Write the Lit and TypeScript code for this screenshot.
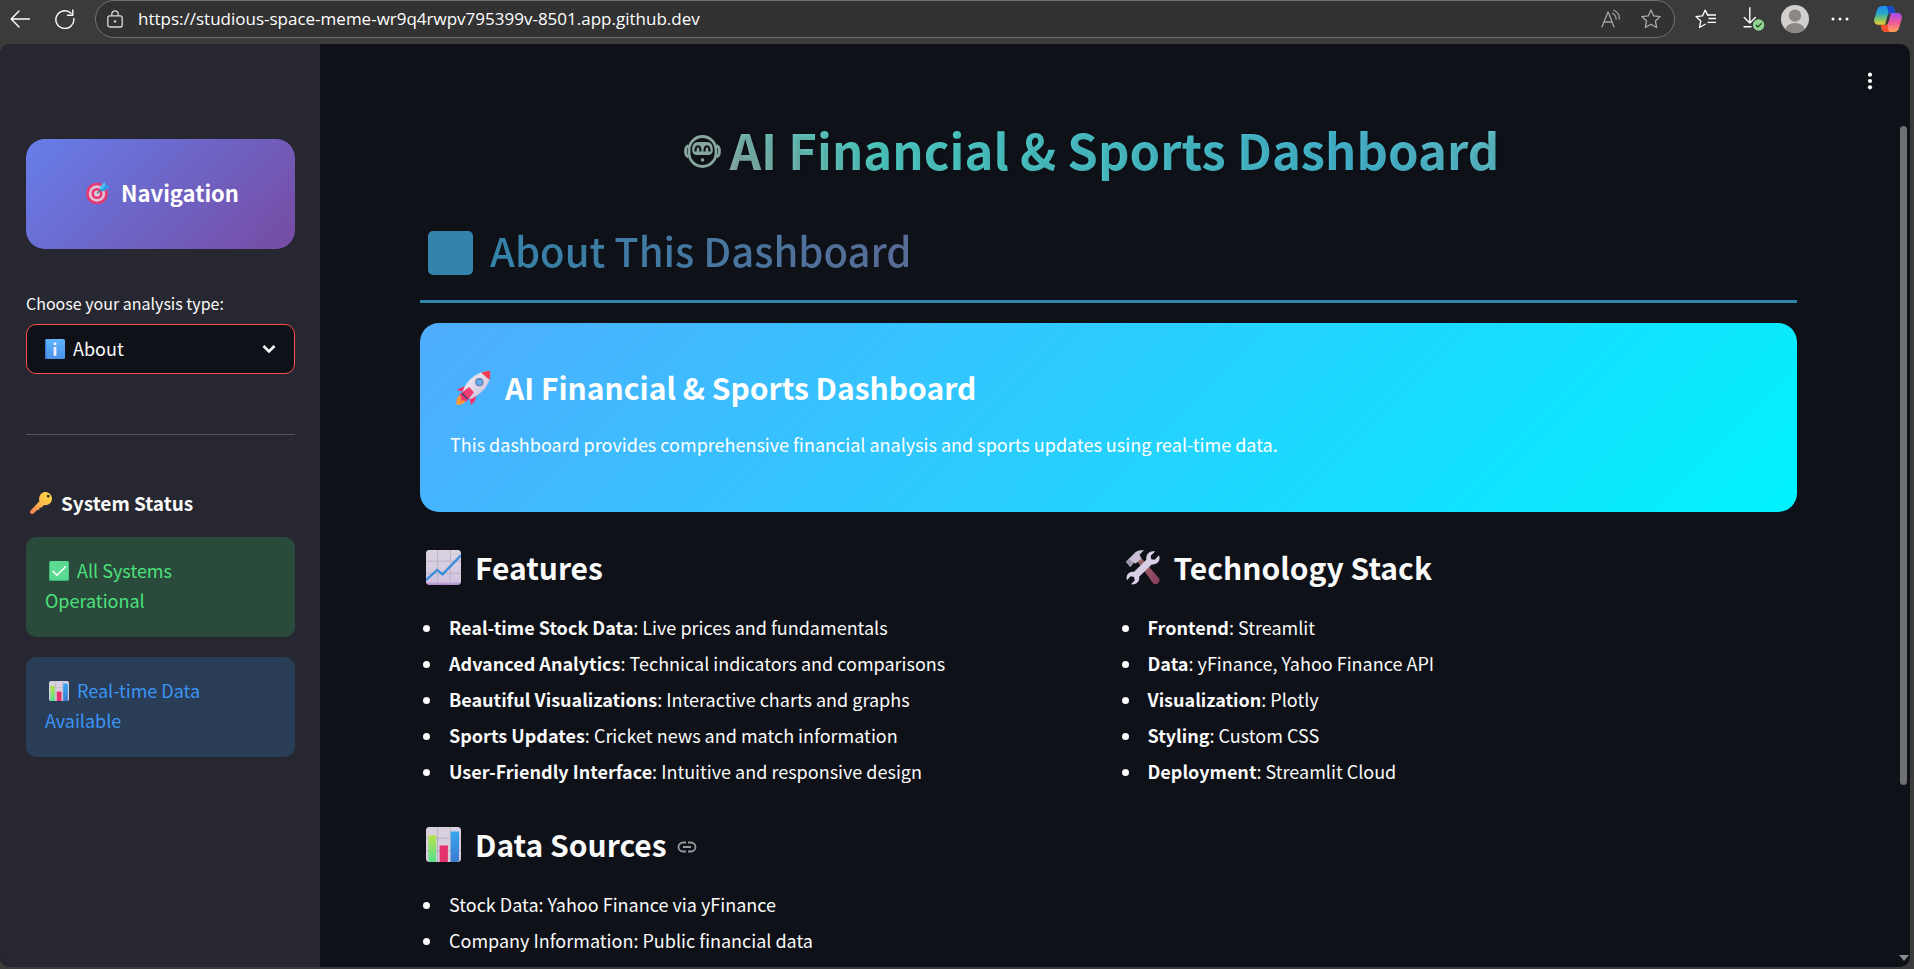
import { LitElement, html, css, svg } from "lit";
import { customElement, property } from "lit/decorators.js";

/** Glyph artwork, each entry holding its viewBox and shapes. */
const ICONS: Record<string, { box: string; art: unknown }> = {
  back: {
    box: "0 0 20 18",
    art: svg`<path d="M19.500 9H1.500M9 1 1.200 9 9 17" fill="none" stroke="#fff" stroke-width="1.400" stroke-linecap="round" stroke-linejoin="round"/>`,
  },
  reload: {
    box: "0 0 20 20",
    art: svg`<path d="M16 4.200A9 8.800 0 1 0 18.800 9.500M17.800 1v5.300h-5.300" fill="none" stroke="#fff" stroke-width="1.400" stroke-linecap="round" stroke-linejoin="round"/>`,
  },
  lock: {
    box: "0 0 16 18",
    art: svg`<rect x=".8" y="5.800" width="14.400" height="11.200" rx="2" fill="none" stroke="#dcdcdc" stroke-width="1.300"/><path d="M4.800 5.500V4a3.200 3.200 0 0 1 6.400 0v1.500" fill="none" stroke="#dcdcdc" stroke-width="1.300"/><circle cx="8" cy="11.400" r="1.200" fill="#dcdcdc"/>`,
  },
  aloud: {
    box: "0 0 20 20",
    art: svg`<path d="M1 18 6.800 3.500h.6L13 18M3 13h8.200" fill="none" stroke="#a3a3a3" stroke-width="1.300" stroke-linecap="round"/><path d="M11.500 4.300a6.500 6.500 0 0 1 3.600 6M12.800 1.200a9.500 9.500 0 0 1 5.600 9" fill="none" stroke="#a3a3a3" stroke-width="1.200" stroke-linecap="round"/>`,
  },
  star: {
    box: "0 0 20 20",
    art: svg`<path d="m10 1 2.700 5.900 6.500.7-4.800 4.400 1.300 6.500L10 15.300l-5.700 3.200L5.600 12 .8 7.600l6.500-.7z" fill="none" stroke="#a9a9a9" stroke-width="1.300" stroke-linejoin="round"/>`,
  },
  favorites: {
    box: "0 0 21 20",
    art: svg`<path d="m12.800 6.400-2.600-5.300-2.700 5.800-6.500.7 4.800 4.400-1.300 6.500 5.700-3.200M14 9.500h6.500M12.500 6h8M13 13.300h7.500" fill="none" stroke="#fff" stroke-width="1.300" stroke-linejoin="round" stroke-linecap="round"/>`,
  },
  download: {
    box: "0 0 22 24",
    art: svg`<path d="M6.800.8v15M1.200 10.500l5.600 5.600 5.600-5.600M1 19.800h7" fill="none" stroke="#fff" stroke-width="1.400" stroke-linecap="round" stroke-linejoin="round"/><circle cx="15.600" cy="18" r="5.700" fill="#8fd694"/><path d="m12.900 18 2 2 3.600-3.700" fill="none" stroke="#1d3b1f" stroke-width="1.200"/>`,
  },
  avatar: {
    box: "0 0 28 28",
    art: svg`<defs><clipPath id="av"><circle cx="14" cy="14" r="14"/></clipPath></defs><g clip-path="url(#av)"><rect width="28" height="28" fill="#d2d0ce"/><circle cx="14" cy="10.600" r="6.200" fill="#8a8785"/><ellipse cx="14" cy="25" rx="9.800" ry="7" fill="#8a8785"/></g>`,
  },
  dots: {
    box: "0 0 18 4",
    art: svg`<g fill="#fff"><circle cx="2" cy="2" r="1.500"/><circle cx="9" cy="2" r="1.500"/><circle cx="16" cy="2" r="1.500"/></g>`,
  },
  copilot: {
    box: "0 0 28 26",
    art: svg`<defs><linearGradient id="cpa" x1="0" y1="0" x2="0" y2="1"><stop offset="0" stop-color="#1a8cf0"/><stop offset=".4" stop-color="#2aa7c8"/><stop offset=".7" stop-color="#7cc46a"/><stop offset="1" stop-color="#f6cb2f"/></linearGradient><linearGradient id="cpb" x1="0" y1="0" x2="0" y2="1"><stop offset="0" stop-color="#a24df0"/><stop offset=".5" stop-color="#f0589a"/><stop offset="1" stop-color="#ffa254"/></linearGradient></defs><path d="M16 0c3 0 4 1.500 4.600 4.200l.8 2.800H17c-2 0-3 1-3.600 3L11 18.800H4.500C1 18.800-.3 16.500.3 13L3 4C4 1 5.500 0 8.500 0z" fill="url(#cpa)"/><path d="M12 26c-3 0-4-1.500-4.600-4.200L6.800 19H11c2 0 3-1 3.600-3L17 7h6.500c3.500 0 4.800 2.500 4.200 6L25 22c-1 3-2.500 4-5.500 4z" fill="url(#cpb)"/><path d="M16 0c3 0 4 1.500 4.600 4.200l.8 2.800H17c-1.400 0-2.200.4-2.800 1.200C14.500 4 13.500 1 12 0z" fill="#1b48c8"/><path d="M12 26c-3 0-4-1.500-4.600-4.200L6.800 19H11c1.400 0 2.200-.4 2.800-1.200-.2 4 .5 7 2.200 8.200z" fill="#f4502f"/>`,
  },
  kebab: {
    box: "0 0 6 18",
    art: svg`<g fill="#fafafa"><circle cx="3" cy="2.700" r="2.100"/><circle cx="3" cy="9" r="2.100"/><circle cx="3" cy="15.300" r="2.100"/></g>`,
  },
  chevron: {
    box: "0 0 14 10",
    art: svg`<path d="m1.500 2 5.500 5.500L12.500 2" fill="none" stroke="#fafafa" stroke-width="2.600"/>`,
  },
  link: {
    box: "0 0 20 12",
    art: svg`<path d="M9 1.500H6a4.500 4.500 0 0 0 0 9h3M11 1.500h3a4.500 4.500 0 0 1 0 9h-3M6 6h8" fill="none" stroke="#97989b" stroke-width="1.800"/>`,
  },
  target: {
    box: "0 0 24 24",
    art: svg`<circle cx="11" cy="13.500" r="10.800" fill="#e5396f"/><circle cx="11" cy="13.500" r="8.200" fill="#dfc3dc"/><circle cx="11" cy="13.500" r="5.600" fill="#e5396f"/><circle cx="11" cy="13.500" r="2.900" fill="#dcd0e4"/><path d="m11 13.500 6-6" stroke="#5d7488" stroke-width="1.600"/><path d="m14 7 4.500-5 .8 2.800L24 6l-5 4.800-4 .8z" fill="#2f9fe8"/><path d="m14 7 4.500-5 .8 2.800-4 5.200z" fill="#54c1f5"/>`,
  },
  info: {
    box: "0 0 20 20",
    art: svg`<defs><linearGradient id="inf" x1="0" y1="0" x2="0" y2="1"><stop offset="0" stop-color="#5fb4fb"/><stop offset="1" stop-color="#4a93ea"/></linearGradient></defs><rect width="20" height="20" rx="1.500" fill="url(#inf)"/><path d="M0 2v16.500a1.500 1.500 0 0 0 1.500 1.500H3L1.200 18V2z" fill="#3a72cf"/><circle cx="10" cy="4.700" r="1.500" fill="#f3ecfb"/><path d="M8.600 8h2.800v8.800H8.600z" fill="#f3ecfb"/>`,
  },
  key: {
    box: "0 0 22 22",
    art: svg`<defs><linearGradient id="ky" x1="1" y1="0" x2="0" y2="1"><stop offset="0" stop-color="#ffe146"/><stop offset=".5" stop-color="#ffb84a"/><stop offset="1" stop-color="#ee7d52"/></linearGradient></defs><path fill-rule="evenodd" d="M15.500 0A6.600 6.600 0 0 1 22 6.500c0 4-3.200 7-7 6.600l-1.300.2-2 2.200-2.200.2-.3 2.100-2.200.3-3 3.100C3 22 1.200 22.200.4 21.300-.3 20.300.200 19 .600 18.500l8.800-9.200A7 7 0 0 1 9.200 6C9.500 2.600 12 0 15.500 0zm2.700 2.800a1.400 1.400 0 1 0 0 2.800 1.400 1.400 0 0 0 0-2.800z" fill="url(#ky)"/>`,
  },
  check: {
    box: "0 0 20 20",
    art: svg`<rect width="20" height="20" rx="1.500" fill="#3cba78"/><rect x="1" y="0" width="18.500" height="18.800" rx="1.500" fill="#5ada92"/><path d="m4 10.200 4 4 8.500-8.400" fill="none" stroke="#fff" stroke-width="1.600" stroke-linecap="round"/>`,
  },
  bars: {
    box: "0 0 36 36",
    art: svg`<defs><linearGradient id="bg1" x1="0" y1="0" x2="0" y2="1"><stop offset="0" stop-color="#b5e34a"/><stop offset="1" stop-color="#55e08f"/></linearGradient><linearGradient id="bg2" x1="0" y1="0" x2="0" y2="1"><stop offset="0" stop-color="#35a7f2"/><stop offset="1" stop-color="#3b7bd0"/></linearGradient></defs><rect width="36" height="36" rx="3.500" fill="#d9d0df"/><path d="M0 11.500h36M0 24.500h36M12 0v36M25 0v36" stroke="#b6aebd" stroke-width="1"/><path d="M2.500 8.500h8V36H3.500a3 3 0 0 1-1-2z" fill="url(#bg1)"/><path d="M14 19h8.500v17H14z" fill="#e3316d"/><path d="M25.500 4.500H34V35l-1.500 1h-7z" fill="url(#bg2)"/>`,
  },
  chart: {
    box: "0 0 36 36",
    art: svg`<defs><linearGradient id="ch" x1="0" y1="0" x2="0" y2="1"><stop offset="0" stop-color="#dad5df"/><stop offset=".9" stop-color="#d3c4e2"/><stop offset="1" stop-color="#a983c9"/></linearGradient></defs><rect width="36" height="36" rx="3.500" fill="url(#ch)"/><path d="M0 11.500h36M0 24h36M12 0v36M25 0v36" stroke="#b9b1c0" stroke-width="1"/><path d="M0 31 11.500 20.500l5.500 4.500L36 5.500" fill="none" stroke="#3a8fdc" stroke-width="2.400"/>`,
  },
  rocket: {
    box: "0 0 36 36",
    art: svg`<defs><linearGradient id="rk" x1="0" y1="0" x2="1" y2="1"><stop offset="0" stop-color="#f6f1fa"/><stop offset="1" stop-color="#c9bcd6"/></linearGradient></defs><path d="M5 26c-4 1-5 5-4.500 9.700C5 36 8.500 35 9.800 31z" fill="#ff9838"/><path d="M11 16 3 19l-2 2 8 1zM21 25l-1.500 7-4 4-2-8z" fill="#f0356b"/><path d="M35 1c1.500 10-4.500 20-15.500 26.500L15 30l-8-8C10 11 22 1 35 1z" fill="url(#rk)"/><path d="M26 2.800C29 1.500 32 1 35 1c.5 3 .200 6-.6 9z" fill="#f23a52"/><path d="m13.500 17.500 5 5.500-8 10-2.500-2-2.800 1L5 27l-2-1.500z" fill="#f23c72"/><circle cx="24" cy="12.500" r="4.200" fill="#5f7fae"/><circle cx="24" cy="12.500" r="2.800" fill="#63aef5"/><path d="m6 24 6 6" stroke="#3b4170" stroke-width="1.500"/>`,
  },
  tools: {
    box: "0 0 36 36",
    art: svg`<defs><linearGradient id="hn" x1="0" y1="0" x2="1" y2="1"><stop offset="0" stop-color="#9b6a68"/><stop offset="1" stop-color="#8b3b5f"/></linearGradient></defs><path d="m13 12 4-3.500L35 29c2 3-2 8-6 5.500z" fill="url(#hn)"/><path d="M1 12 11 2c2-1.500 5-2 8.500-1.700L15 5l2 4-6 5-2-1-3.500 4.500z" fill="#c9c0d6"/><path d="m1 12 4.500 5.500L9 13l-5-4z" fill="#9d93ad"/><path d="M31 1.500 26.500 6l.5 3.500 3.500.5L35 5.500c2 5-1.500 10-7.500 9.300L14.500 27.500C15.500 32 12 36 6 35.300l4-4-.7-3.600-3.500-.6L2 31c-1.500-5 2-9 7-8.500L22 10C21 4.500 25.500 0 31 1.500z" fill="#d8cfe6"/>`,
  },
  robot: {
    box: "0 0 37 33",
    art: svg`<g fill="none" stroke="#87a69d" stroke-width="2.800"><rect x="5" y="1.500" width="27" height="30" rx="13.500" ry="13.500"/><path d="M4.500 10.500c-4 1.500-4 10 0 11.500M32.500 10.500c4 1.500 4 10 0 11.500"/></g><path d="M14 7h9c4 0 6 3 5.800 8 0 3.500-2 5-4.800 5H13c-2.800 0-4.800-1.500-4.800-5C8 10 10 7 14 7z" fill="#87a69d"/><path d="M11.500 16.500c0-7 5-7 5 0M20.500 16.500c0-7 5-7 5 0" fill="none" stroke="#0e1117" stroke-width="2.200"/><circle cx="18.500" cy="25" r="1.800" fill="#87a69d"/>`,
  },
  square: {
    box: "0 0 45 44",
    art: svg`<rect width="45" height="44" rx="5" fill="#3483aa"/>`,
  },
};

/** Inline SVG icon of a given pixel size. */
const icon = (name: string, width: number, height = width) => html`
  <svg class="icon" width=${width} height=${height} viewBox=${ICONS[name].box} preserveAspectRatio="none" aria-hidden="true">
    ${ICONS[name].art}
  </svg>
`;

const shared = css`
  * {
    box-sizing: border-box;
  }
  .icon {
    display: block;
    flex: none;
  }
  button {
    display: grid;
    place-items: center;
    padding: 0;
    border: 0;
    background: none;
    color: inherit;
    font: inherit;
    cursor: pointer;
  }
  h1,
  h2,
  h3,
  p,
  ul {
    margin: 0;
    padding: 0;
  }
`;

@customElement("browser-bar")
class BrowserBar extends LitElement {
  static styles = [
    shared,
    css`
      :host {
        display: flex;
        flex: none;
        height: 44px;
        padding-bottom: 6px;
        background: #3b3b3b;
        font-family: "Open Sans", "Noto Sans", sans-serif;
      }
      .nav {
        display: grid;
        grid-template-columns: 40px 50px;
        padding-right: 5px;
      }
      .address {
        display: flex;
        flex: 1;
        align-items: center;
        gap: 15px;
        min-width: 0;
        padding: 0 13px 0 11px;
        border: 1px solid #707070;
        border-radius: 19px;
        background: #323232;
      }
      .url {
        flex: 1;
        min-width: 0;
        padding: 0;
        border: 0;
        outline: 0;
        background: none;
        color: #fff;
        font-family: inherit;
        font-size: 17px;
        line-height: 24px;
      }
      .inline {
        display: flex;
        gap: 20px;
      }
      .tools {
        display: grid;
        grid-template-columns: 52px 46px 36px 54px 42px;
        padding: 0 5px 0 4px;
      }
    `,
  ];

  render() {
    return html`
      <nav class="nav" aria-label="History">
        <button aria-label="Back">${icon("back", 20, 18)}</button>
        <button aria-label="Refresh">${icon("reload", 20)}</button>
      </nav>
      <div class="address">
        ${icon("lock", 16, 18)}
        <input class="url" aria-label="Address" value="https://studious-space-meme-wr9q4rwpv795399v-8501.app.github.dev" />
        <div class="inline">
          <button aria-label="Read aloud">${icon("aloud", 20)}</button>
          <button aria-label="Add to favorites">${icon("star", 20)}</button>
        </div>
      </div>
      <div class="tools">
        <button aria-label="Favorites">${icon("favorites", 21, 20)}</button>
        <button aria-label="Downloads">${icon("download", 22, 24)}</button>
        <button aria-label="Profile">${icon("avatar", 28)}</button>
        <button aria-label="More">${icon("dots", 18, 4)}</button>
        <button aria-label="Copilot">${icon("copilot", 28, 26)}</button>
      </div>
    `;
  }
}

@customElement("side-panel")
class SidePanel extends LitElement {
  static styles = [
    shared,
    css`
      :host {
        display: flex;
        flex: none;
        flex-direction: column;
        width: 320px;
        padding: 95px 25px 0 26px;
        background: #262730;
      }
      .banner {
        display: flex;
        align-items: center;
        justify-content: center;
        gap: 11px;
        padding: 38px 0 42px 4px;
        border-radius: 19px;
        background: linear-gradient(135deg, #667eea, #764ba2);
        color: #fff;
        font-size: 22px;
        font-weight: 600;
        line-height: 30px;
      }
      .label {
        margin-top: 40px;
        font-size: 16px;
        line-height: 28px;
      }
      .picker {
        display: grid;
        align-items: center;
        margin-top: 7px;
      }
      .picker > * {
        grid-area: 1 / 1;
      }
      .picker .icon {
        pointer-events: none;
        margin-left: 19px;
      }
      .picker .icon:last-child {
        justify-self: end;
        margin-right: 19px;
      }
      select {
        appearance: none;
        width: 100%;
        height: 50px;
        padding: 0 46px 3px;
        border: 1px solid #ff4b4b;
        border-radius: 10px;
        background: #0e1117;
        color: #fafafa;
        font-family: inherit;
        font-size: 18px;
      }
      hr {
        width: 100%;
        height: 1px;
        margin: 60px 0 54px;
        border: 0;
        background: #52535b;
      }
      .status {
        display: flex;
        align-items: center;
        gap: 9px;
        padding-left: 4px;
        font-size: 19px;
        font-weight: 600;
        line-height: 28px;
      }
      .alerts {
        display: grid;
        gap: 20px;
        margin-top: 20px;
      }
      .alert {
        padding: 18px 60px 22px 19px;
        border-radius: 10px;
        font-size: 18px;
        line-height: 30px;
      }
      .alert .icon {
        display: inline-block;
        margin: 0 4px 0 4px;
        vertical-align: -3px;
      }
      .success {
        background: #2a4a3b;
        color: #4de07c;
      }
      .notice {
        background: #2a3d56;
        color: #3b95f5;
      }
    `,
  ];

  render() {
    return html`
      <h3 class="banner">${icon("target", 24)}<span>Navigation</span></h3>
      <label class="label" for="analysis">Choose your analysis type:</label>
      <div class="picker">
        <select id="analysis">
          <option>About</option>
        </select>
        ${icon("info", 20)} ${icon("chevron", 14, 10)}
      </div>
      <hr />
      <h3 class="status">${icon("key", 22)}<span>System Status</span></h3>
      <div class="alerts">
        <p class="alert success" role="status">${icon("check", 20)}All Systems Operational</p>
        <p class="alert notice" role="status">${icon("bars", 20)}Real-time Data Available</p>
      </div>
    `;
  }
}

type Entry = { term?: string; text: string };

@customElement("topic-list")
class TopicList extends LitElement {
  @property() glyph = "";
  @property() heading = "";
  @property({ type: Boolean }) linked = false;
  @property({ attribute: false }) entries: Entry[] = [];

  static styles = [
    shared,
    css`
      :host {
        display: block;
      }
      .heading {
        display: flex;
        align-items: center;
        gap: 14px;
        margin: 34px 0 21px;
        padding-left: 6px;
        font-size: 30px;
        font-weight: 600;
        line-height: 42px;
      }
      .anchor {
        padding-top: 6px;
        margin-left: -4px;
      }
      ul {
        padding-left: 29px;
        font-size: 18px;
        line-height: 36px;
        list-style: none;
      }
      li::before {
        content: "";
        display: inline-block;
        width: 7px;
        height: 7px;
        margin: 0 19px 0 -26px;
        border-radius: 50%;
        background: currentColor;
        vertical-align: 3px;
      }
      strong {
        font-weight: 600;
      }
    `,
  ];

  render() {
    return html`
      <h2 class="heading">
        ${icon(this.glyph, 35)}<span>${this.heading}</span>
        ${this.linked ? html`<a class="anchor" href="#data-sources" aria-label="Link to heading">${icon("link", 20, 12)}</a>` : ""}
      </h2>
      <ul>
        ${this.entries.map((e) => html`<li>${e.term ? html`<strong>${e.term}</strong>: ` : ""}${e.text}</li>`)}
      </ul>
    `;
  }
}

@customElement("app-root")
class AppRoot extends LitElement {
  private features: Entry[] = [
    { term: "Real-time Stock Data", text: "Live prices and fundamentals" },
    { term: "Advanced Analytics", text: "Technical indicators and comparisons" },
    { term: "Beautiful Visualizations", text: "Interactive charts and graphs" },
    { term: "Sports Updates", text: "Cricket news and match information" },
    { term: "User-Friendly Interface", text: "Intuitive and responsive design" },
  ];

  private stack: Entry[] = [
    { term: "Frontend", text: "Streamlit" },
    { term: "Data", text: "yFinance, Yahoo Finance API" },
    { term: "Visualization", text: "Plotly" },
    { term: "Styling", text: "Custom CSS" },
    { term: "Deployment", text: "Streamlit Cloud" },
  ];

  private sources: Entry[] = [
    { text: "Stock Data: Yahoo Finance via yFinance" },
    { text: "Company Information: Public financial data" },
  ];

  static styles = [
    shared,
    css`
      :host {
        display: flex;
        flex-direction: column;
        height: 100vh;
        overflow: hidden;
        background: #3b3b3b;
        color: #fafafa;
        font-family: "Noto Sans CJK SC", "Noto Sans", sans-serif;
      }
      .page {
        position: relative;
        display: flex;
        flex: 1;
        min-height: 0;
        margin: 0 4px 2px 0;
        border-radius: 10px;
        background: #0e1117;
        overflow: hidden;
      }
      main {
        flex: 1;
        min-width: 0;
        padding: 72px 100px 0;
        overflow: hidden;
      }
      .menu {
        position: absolute;
        top: 22px;
        right: 25px;
        width: 30px;
        height: 30px;
      }
      .title {
        display: flex;
        align-items: center;
        justify-content: center;
        gap: 9px;
        padding-right: 34px;
        background: linear-gradient(45deg, #ff6b6b, #4ecdc4, #45b7d1, #96ceb4);
        background-clip: text;
        -webkit-background-clip: text;
        color: transparent;
        font-size: 49px;
        font-weight: 700;
        line-height: 66px;
        text-shadow: 2px 2px 4px rgba(0, 0, 0, 0.1);
      }
      .title .icon,
      .about .icon {
        margin-top: 5px;
      }
      .about {
        margin: 41px 0 20px;
        border-bottom: 3px solid #2e86ab;
      }
      .about h2 {
        display: flex;
        align-items: center;
        gap: 17px;
        padding: 0 0 23px 8px;
        background: linear-gradient(90deg, #2e86ab, #a23b72);
        background-clip: text;
        -webkit-background-clip: text;
        color: transparent;
        font-size: 40px;
        font-weight: 500;
        line-height: 54px;
      }
      .card {
        padding: 43px 30px 52px;
        border-radius: 19px;
        background: linear-gradient(135deg, #4facfe, #00f2fe);
        color: #fff;
      }
      .card h2 {
        display: flex;
        align-items: center;
        gap: 14px;
        margin-bottom: 20px;
        padding-left: 6px;
        font-size: 30px;
        font-weight: 600;
        line-height: 42px;
      }
      .card p {
        font-size: 18px;
        line-height: 32px;
      }
      .columns {
        display: grid;
        grid-template-columns: 1fr 1fr;
        gap: 20px;
      }
      .scrollbar {
        display: flex;
        flex: none;
        flex-direction: column;
        align-items: center;
        width: 13px;
        padding: 82px 0 6px;
      }
      .thumb {
        flex: 659;
        width: 7px;
        border-radius: 4px;
        background: #6f7073;
      }
      .track {
        flex: 170;
      }
      .arrow {
        border: 5px solid transparent;
        border-top: 6px solid #8a8b8e;
        border-bottom: 0;
      }
    `,
  ];

  render() {
    return html`
      <browser-bar></browser-bar>
      <div class="page">
        <side-panel></side-panel>
        <main>
          <h1 class="title">${icon("robot", 37, 33)}<span>AI Financial &amp; Sports Dashboard</span></h1>
          <div class="about">
            <h2>${icon("square", 45, 44)}<span>About This Dashboard</span></h2>
          </div>
          <section class="card">
            <h2>${icon("rocket", 35)}<span>AI Financial &amp; Sports Dashboard</span></h2>
            <p>This dashboard provides comprehensive financial analysis and sports updates using real-time data.</p>
          </section>
          <div class="columns">
            <topic-list glyph="chart" heading="Features" .entries=${this.features}></topic-list>
            <topic-list glyph="tools" heading="Technology Stack" .entries=${this.stack}></topic-list>
          </div>
          <topic-list glyph="bars" heading="Data Sources" linked .entries=${this.sources}></topic-list>
        </main>
        <div class="scrollbar" aria-hidden="true">
          <div class="thumb"></div>
          <div class="track"></div>
          <div class="arrow"></div>
        </div>
        <button class="menu" aria-label="Main menu">${icon("kebab", 6, 18)}</button>
      </div>
    `;
  }
}
